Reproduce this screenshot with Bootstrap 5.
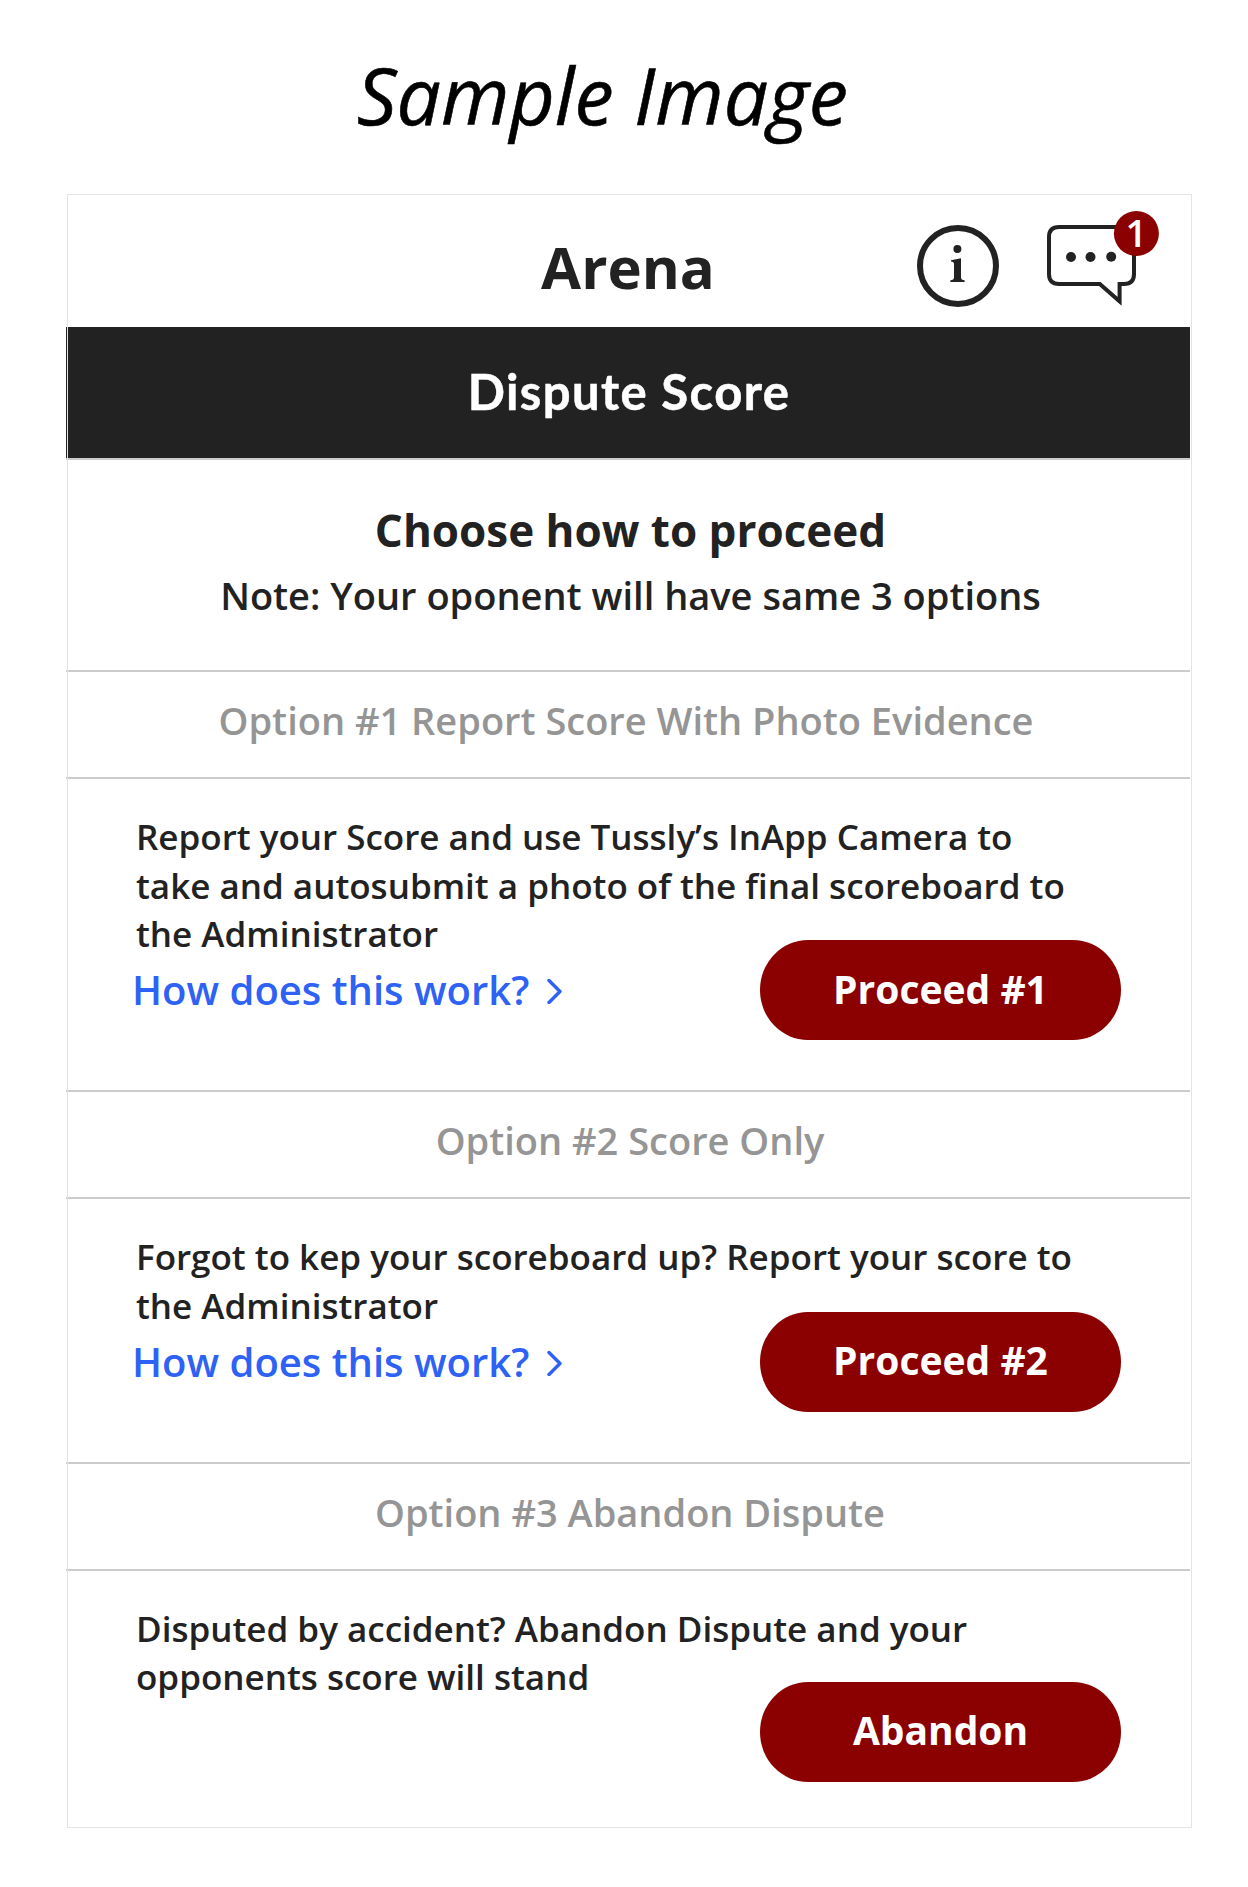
<!DOCTYPE html>
<html lang="en">
<head>
<meta charset="utf-8">
<meta name="viewport" content="width=device-width, initial-scale=1">
<title>Arena – Dispute Score</title>
<link href="https://cdn.jsdelivr.net/npm/bootstrap@5.3.0/dist/css/bootstrap.min.css" rel="stylesheet">
<style>
  body { font-family: "Open Sans", "Noto Sans", sans-serif; color: #222; background: #fff; }
  .sample-title { font-size: 78.5px; font-style: italic; line-height: 100px; color: #000; padding: 45px 43px 0 0; height: 194px; -webkit-text-stroke: .6px #000; }
  .phone { width: 1126px; height: 1634px; margin-left: 66px; padding-right: 2px; }
  .phone::after { content: ""; position: absolute; inset: 0 0 0 1px; border: 1px solid #e4e4e4; pointer-events: none; }
  .app-header { height: 133px; }
  .app-title { font-size: 58px; font-weight: 700; line-height: 80px; padding-top: 33px; }
  .app-icons { right: 28px; top: 14px; }
  .screen-bar { height: 133px; background: #222; border-bottom: 2px solid #ccc; padding: 0 0 3px 2px; font: 700 49px Lato, sans-serif; letter-spacing: 1.4px; -webkit-text-stroke: .5px currentColor; }
  .intro { height: 210px; padding: 40px 0 0 5px; }
  .intro h2 { font-size: 44px; font-weight: 700; line-height: 60px; margin-bottom: 5px; }
  .intro p, .option-head, .option-body p, .how-link { font-weight: 600; }
  .intro p { font-size: 38px; line-height: 60px; }
  .option-head { height: 109px; border: solid #ccc; border-width: 2px 0; padding: 0 0 8px 4px; color: #959595; font-size: 38px; }
  .option-body { padding: 34px 69px 50px 70px; }
  .option-body p { font-size: 35px; line-height: 48.5px; }
  .actions { height: 100px; margin-top: -18.5px; }
  .how-link { font-size: 40px; color: #2d62f5; margin-left: -4px; gap: 18px; }
  .btn-maroon { width: 361px; height: 100px; border: 0; border-radius: 48px / 50px; background: #8b0000; color: #fff; font-size: 39px; font-weight: 700; padding: 0 0 2px; }
  .btn-maroon:hover { background: #750000; color: #fff; }
  .actions-last { margin-top: -20px; }
</style>
</head>
<body>
<h1 class="sample-title text-center fw-normal mb-0">Sample Image</h1>

<main class="phone position-relative">
  <header class="app-header position-relative">
    <div class="app-title text-center">Arena</div>
    <svg class="app-icons position-absolute" width="252" height="110" viewBox="910 208 252 110" role="img" aria-label="Information and messages">
      <circle cx="958" cy="266" r="38" fill="none" stroke="#222" stroke-width="6"/>
      <circle cx="957.4" cy="249" r="4" fill="#222"/>
      <path d="M951 260.2 961 258.2V277.5Q961 280 964.6 280.2V282H950.4V280.2Q954 280 954 277.5V264Q954 261.8 951 261.5Z" fill="#222"/>
      <path d="M1059 227H1124Q1134 227 1134 237V274Q1134 284 1124 284H1119.6V301.3L1099.8 284H1059Q1049 284 1049 274V237Q1049 227 1059 227Z" fill="#fff" stroke="#222" stroke-width="4"/>
      <g fill="#222"><circle cx="1071" cy="257" r="5"/><circle cx="1090.5" cy="257" r="5"/><circle cx="1111.2" cy="256.8" r="5"/></g>
      <circle cx="1136.4" cy="233.5" r="22.5" fill="#8b0000"/>
      <text x="1125.5" y="247.3" font-size="37.5" font-weight="600" fill="#fff">1</text>
    </svg>
  </header>

  <div class="screen-bar d-flex align-items-center justify-content-center text-white">Dispute Score</div>

  <section class="intro text-center">
    <h2>Choose how to proceed</h2>
    <p class="mb-0">Note: Your oponent will have same 3 options</p>
  </section>

  <section>
    <div class="option-head d-flex align-items-center justify-content-center pe-2">Option #1 Report Score With Photo Evidence</div>
    <div class="option-body">
      <p class="mb-0">Report your Score and use Tussly’s InApp Camera to<br>take and autosubmit a photo of the final scoreboard to<br>the Administrator</p>
      <div class="actions d-flex align-items-center justify-content-between">
        <a href="#" class="how-link d-flex align-items-center text-decoration-none">How does this work?
          <svg width="16" height="28" viewBox="0 0 16 28" fill="none" stroke="currentColor" stroke-width="3.4" stroke-linecap="round" stroke-linejoin="round"><path d="M2 4.5 13 15.5 2 26.5"/></svg></a>
        <button type="button" class="btn btn-maroon">Proceed #1</button>
      </div>
    </div>
  </section>

  <section>
    <div class="option-head d-flex align-items-center justify-content-center">Option #2 Score Only</div>
    <div class="option-body">
      <p class="mb-0">Forgot to kep your scoreboard up? Report your score to<br>the Administrator</p>
      <div class="actions d-flex align-items-center justify-content-between">
        <a href="#" class="how-link d-flex align-items-center text-decoration-none">How does this work?
          <svg width="16" height="28" viewBox="0 0 16 28" fill="none" stroke="currentColor" stroke-width="3.4" stroke-linecap="round" stroke-linejoin="round"><path d="M2 4.5 13 15.5 2 26.5"/></svg></a>
        <button type="button" class="btn btn-maroon">Proceed #2</button>
      </div>
    </div>
  </section>

  <section>
    <div class="option-head d-flex align-items-center justify-content-center">Option #3 Abandon Dispute</div>
    <div class="option-body pb-0">
      <p class="mb-0">Disputed by accident? Abandon Dispute and your<br>opponents score will stand</p>
      <div class="actions actions-last d-flex align-items-center justify-content-end">
        <button type="button" class="btn btn-maroon">Abandon</button>
      </div>
    </div>
  </section>
</main>
<script src="https://cdn.jsdelivr.net/npm/bootstrap@5.3.0/dist/js/bootstrap.bundle.min.js"></script>
</body>
</html>
